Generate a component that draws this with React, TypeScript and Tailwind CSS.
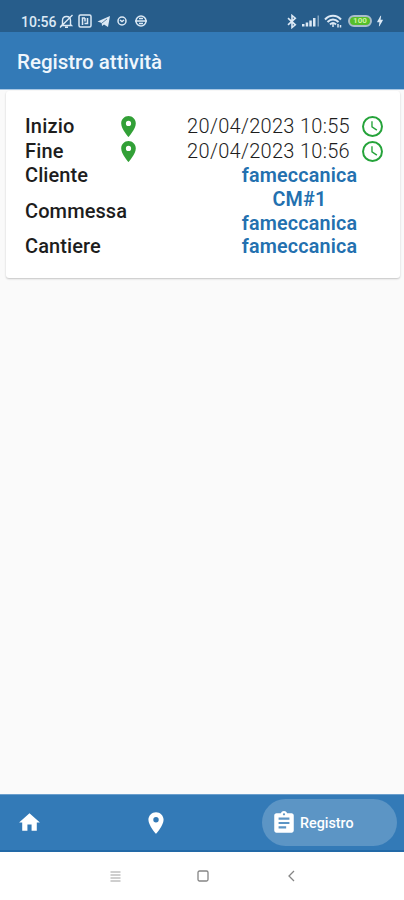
import { MdAssignment, MdBolt, MdHome, MdPlace } from "react-icons/md";

const times = [
  { label: "Inizio", value: "20/04/2023 10:55" },
  { label: "Fine", value: "20/04/2023 10:56" },
];

function StatusBar() {
  return (
    <div className="flex h-8 items-start justify-between bg-[#275d8b] pt-[13px] pl-[21px] pr-[17px] text-[#dce9f5]">
      <div className="flex h-4 items-center">
        <span className="w-[37px] pt-px text-[14px] leading-4 font-medium">10:56</span>
        {/* muted bell */}
        <svg className="ml-px" width="15" height="15" viewBox="0 0 15 15" fill="none" stroke="currentColor" strokeWidth="1.4">
          <path d="M3.500 10.500V6.500c0-2.500 1.500-4 4-4s4 1.500 4 4v4l1 1H2.500zM6 13.300h3M1 13.500L13.500 1" />
        </svg>
        {/* NFC */}
        <svg className="ml-1" width="14" height="14" viewBox="0 0 14 14" fill="none" stroke="currentColor" strokeWidth="1.500">
          <rect x="1" y="1" width="12" height="12" rx="1.500" />
          <path d="M4.500 11V4H7M6.500 9.500h3V4M7 4v3.500" />
        </svg>
        {/* Telegram */}
        <svg className="ml-[5px]" width="14" height="14" viewBox="0 0 14 14" fill="currentColor">
          <path d="M0.500 7.500L13 2l-2 11-4-2.500L5 12l-.3-3z" />
          <path d="M5 9l5-4" stroke="#275d8b" strokeWidth=".7" />
        </svg>
        <svg className="ml-[5px]" width="12" height="12" viewBox="0 0 12 12" fill="none" stroke="currentColor" strokeWidth="1.500">
          <circle cx="6" cy="6" r="4" />
          <path d="M4 5l2 1.500L8 5" />
        </svg>
        <svg className="ml-[6px]" width="14" height="14" viewBox="0 0 14 14" fill="none" stroke="currentColor" strokeWidth="1.500">
          <circle cx="7" cy="7" r="5" />
          <path d="M1 7h12M5 4.500h4M5 9.500h4" />
        </svg>
      </div>
      <div className="flex h-4 items-center">
        {/* Bluetooth */}
        <svg width="10" height="15" viewBox="0 0 10 15" fill="none" stroke="currentColor" strokeWidth="1.600">
          <path d="M1 4.200l7.300 6.600L5 13.500v-12l3.300 2.700L1 10.800" />
        </svg>
        <svg className="ml-[5px]" width="18" height="12" viewBox="0 0 18 12" fill="currentColor">
          <path d="M0 9h2.500v2.500H0zM3.700 7.500h2.500v4H3.700zM7.300 5.500h2.500v6H7.300zM11 3h2.500v8.500H11z" />
          <path d="M15.500 0.500h1.500v11h-1.500z" opacity=".5" />
        </svg>
        <svg className="ml-1" width="18" height="14" viewBox="0 0 18 14" fill="none" stroke="currentColor" strokeWidth="2">
          <path d="M1 5.500c4.500-5 11.500-5 16 0M3.500 8c3.500-3.500 7.500-3.500 11 0M6 10.500c1.800-1.800 4.200-1.800 6 0" />
          <path d="M9 10v3M14 10v3.500M16.500 11v2.500" strokeWidth="1.500" />
        </svg>
        <div className="ml-1.5 flex h-[12px] w-[24px] items-center justify-center rounded-full border-2 border-[#a9bccb] bg-[#55bd2a] text-[8px] leading-none font-bold text-[#c9f39f]">
          100
        </div>
        <MdBolt className="ml-px" size={14} />
      </div>
    </div>
  );
}

function Clock() {
  return (
    <svg className="ml-[10px] shrink-0 text-[#25a33a]" width="25" height="25" viewBox="0 0 24 24" fill="none" stroke="currentColor">
      <circle cx="12" cy="12" r="9.100" strokeWidth="1.900" />
      <path d="M11.500 7v5.300l4.700 3.200" strokeWidth="1.300" />
    </svg>
  );
}

function ActivityCard() {
  return (
    <section className="mt-px ml-1.5 h-[187px] w-[394px] rounded-[3px] bg-white pt-[23px] pr-[15px] pl-[19px] text-[20px] leading-[23.7px] text-[#1d1d1d] shadow-[0_1px_2px_rgba(0,0,0,0.22)]">
      {times.map((item) => (
        <div key={item.label} className="flex h-[24.700px] items-center">
          <span className="w-[91px] pt-px font-medium tracking-[0.2px]">{item.label}</span>
          <MdPlace size={25} className="text-[#32a037]" />
          <span className="ml-auto pt-px font-light tracking-[0.3px]">{item.value}</span>
          <Clock />
        </div>
      ))}
      <div className="pt-px">
        <Detail label="Cliente" lines={["fameccanica"]} />
        <Detail label="Commessa" lines={["CM#1", "fameccanica"]} />
        <Detail label="Cantiere" lines={["fameccanica"]} />
      </div>
    </section>
  );
}

function Detail({ label, lines }: { label: string; lines: string[] }) {
  return (
    <div className="flex items-center justify-between font-medium tracking-[0.1px]">
      <span>{label}</span>
      <div className="w-[171px] text-center text-[19.7px] font-semibold tracking-[0.2px] text-[#2370af]">
        {lines.map((line) => (
          <div key={line}>{line}</div>
        ))}
      </div>
    </div>
  );
}

export default function App() {
  return (
    <div className="flex h-[900px] w-[404px] flex-col overflow-hidden bg-[#fafafa] font-[Roboto,sans-serif]">
      <StatusBar />
      <header className="flex h-[58px] items-center border-b border-[#a9c8e4] bg-[#337ab7] pt-[3px] pl-[17px] text-[20.500px] font-medium text-[#eff6fc]">
        <h1>Registro attività</h1>
      </header>

      <main className="flex-1">
        <ActivityCard />
      </main>

      <nav className="flex h-[58px] items-center border-t border-b-2 border-t-[#6b9fcd] border-b-[#2269a7] bg-[#337ab7] pr-[7px] pl-[17px] text-white">
        <MdHome size={25} />
        <MdPlace size={26} className="ml-[101px]" />
        <button className="ml-auto flex h-[47px] w-[135px] items-center rounded-full bg-[#5c95c5] pl-[9px] text-[14.300px] font-medium">
          <MdAssignment size={26} />
          <span className="ml-[3px] pt-0.5">Registro</span>
        </button>
      </nav>

      {/* system navigation */}
      <div className="flex h-12 items-center bg-white pl-[110px] text-[#858585]">
        <svg width="11" height="11" viewBox="0 0 11 11" stroke="currentColor" fill="none">
          <path d="M0.500 1h10M0.500 4h10M0.500 7h10M0.500 10h10" strokeWidth=".8" />
        </svg>
        <svg className="ml-[76px]" width="12" height="12" viewBox="0 0 12 12" stroke="currentColor" fill="none">
          <rect x="1" y="1" width="10" height="10" rx="1.500" strokeWidth="1.300" />
        </svg>
        <svg className="ml-[79px]" width="7" height="12" viewBox="0 0 7 12" stroke="currentColor" fill="none">
          <path d="M6 1L1 6l5 5" strokeWidth="1.300" />
        </svg>
      </div>
    </div>
  );
}
